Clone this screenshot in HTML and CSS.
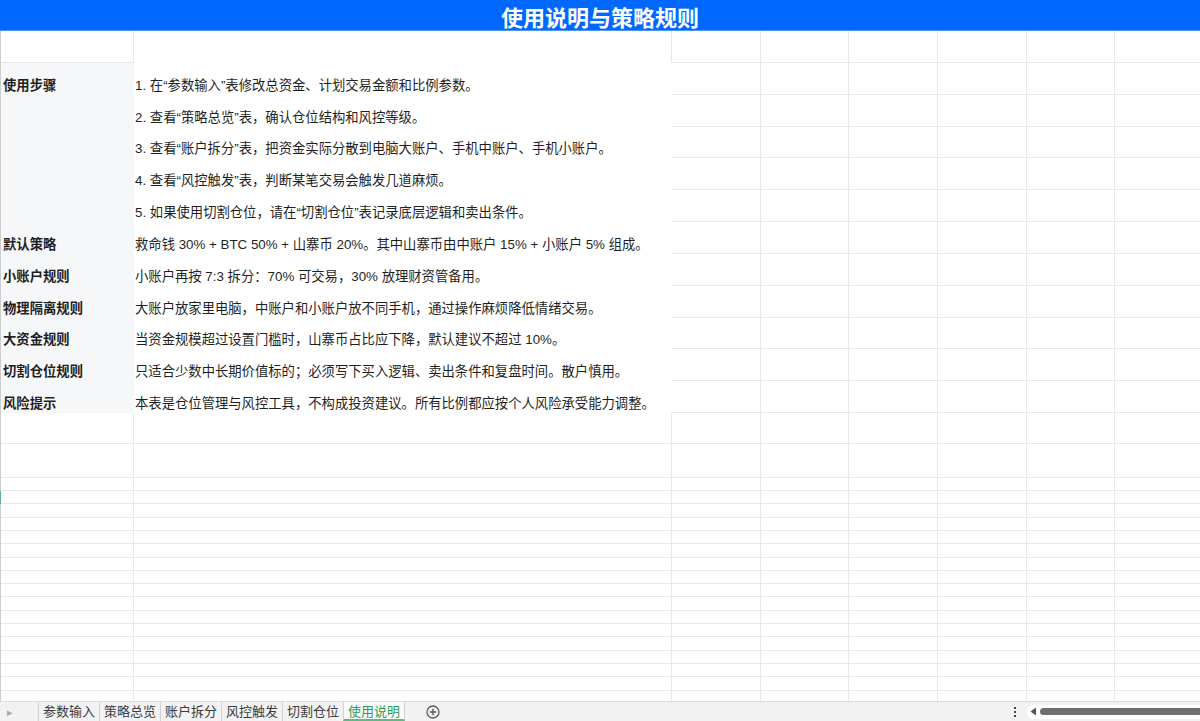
FILE: index.html
```html
<!DOCTYPE html>
<html lang="zh-CN">

<head>
    <meta charset="UTF-8">
    <meta name="viewport" content="width=device-width, initial-scale=1.0">
    <title>使用说明</title>

    <link rel="stylesheet" href="styles.css">
</head>

<body>

    <header class="title">使用说明与策略规则</header>

    <div class="sheet">
        <div class="row r-head">
            <div class="cell"></div>
            <div class="cell merged"></div>
            <div class="cell"></div><div class="cell"></div><div class="cell"></div><div class="cell"></div><div class="cell"></div><div class="cell"></div><div class="cell"></div>
        </div>

        <div class="row r-text">
            <div class="cell label">使用步骤</div>
            <div class="cell body">1. 在“参数输入”表修改总资金、计划交易金额和比例参数。</div>
            <div class="cell"></div><div class="cell"></div><div class="cell"></div><div class="cell"></div><div class="cell"></div><div class="cell"></div><div class="cell"></div>
        </div>
        <div class="row r-text">
            <div class="cell label"></div>
            <div class="cell body">2. 查看“策略总览”表，确认仓位结构和风控等级。</div>
            <div class="cell"></div><div class="cell"></div><div class="cell"></div><div class="cell"></div><div class="cell"></div><div class="cell"></div><div class="cell"></div>
        </div>
        <div class="row r-text">
            <div class="cell label"></div>
            <div class="cell body">3. 查看“账户拆分”表，把资金实际分散到电脑大账户、手机中账户、手机小账户。</div>
            <div class="cell"></div><div class="cell"></div><div class="cell"></div><div class="cell"></div><div class="cell"></div><div class="cell"></div><div class="cell"></div>
        </div>
        <div class="row r-text">
            <div class="cell label"></div>
            <div class="cell body">4. 查看“风控触发”表，判断某笔交易会触发几道麻烦。</div>
            <div class="cell"></div><div class="cell"></div><div class="cell"></div><div class="cell"></div><div class="cell"></div><div class="cell"></div><div class="cell"></div>
        </div>
        <div class="row r-text">
            <div class="cell label"></div>
            <div class="cell body">5. 如果使用切割仓位，请在“切割仓位”表记录底层逻辑和卖出条件。</div>
            <div class="cell"></div><div class="cell"></div><div class="cell"></div><div class="cell"></div><div class="cell"></div><div class="cell"></div><div class="cell"></div>
        </div>
        <div class="row r-text">
            <div class="cell label">默认策略</div>
            <div class="cell body">救命钱 30% + BTC 50% + 山寨币 20%。其中山寨币由中账户 15% + 小账户 5% 组成。</div>
            <div class="cell"></div><div class="cell"></div><div class="cell"></div><div class="cell"></div><div class="cell"></div><div class="cell"></div><div class="cell"></div>
        </div>
        <div class="row r-text">
            <div class="cell label">小账户规则</div>
            <div class="cell body">小账户再按 7:3 拆分：70% 可交易，30% 放理财资管备用。</div>
            <div class="cell"></div><div class="cell"></div><div class="cell"></div><div class="cell"></div><div class="cell"></div><div class="cell"></div><div class="cell"></div>
        </div>
        <div class="row r-text">
            <div class="cell label">物理隔离规则</div>
            <div class="cell body">大账户放家里电脑，中账户和小账户放不同手机，通过操作麻烦降低情绪交易。</div>
            <div class="cell"></div><div class="cell"></div><div class="cell"></div><div class="cell"></div><div class="cell"></div><div class="cell"></div><div class="cell"></div>
        </div>
        <div class="row r-text">
            <div class="cell label">大资金规则</div>
            <div class="cell body">当资金规模超过设置门槛时，山寨币占比应下降，默认建议不超过 10%。</div>
            <div class="cell"></div><div class="cell"></div><div class="cell"></div><div class="cell"></div><div class="cell"></div><div class="cell"></div><div class="cell"></div>
        </div>
        <div class="row r-text">
            <div class="cell label">切割仓位规则</div>
            <div class="cell body">只适合少数中长期价值标的；必须写下买入逻辑、卖出条件和复盘时间。散户慎用。</div>
            <div class="cell"></div><div class="cell"></div><div class="cell"></div><div class="cell"></div><div class="cell"></div><div class="cell"></div><div class="cell"></div>
        </div>
        <div class="row r-text">
            <div class="cell label">风险提示</div>
            <div class="cell body">本表是仓位管理与风控工具，不构成投资建议。所有比例都应按个人风险承受能力调整。</div>
            <div class="cell"></div><div class="cell"></div><div class="cell"></div><div class="cell"></div><div class="cell"></div><div class="cell"></div><div class="cell"></div>
        </div>

        <div class="row r-a"><div class="cell"></div><div class="cell"></div><div class="cell"></div><div class="cell"></div><div class="cell"></div><div class="cell"></div><div class="cell"></div><div class="cell"></div><div class="cell"></div></div>
        <div class="row r-b"><div class="cell"></div><div class="cell"></div><div class="cell"></div><div class="cell"></div><div class="cell"></div><div class="cell"></div><div class="cell"></div><div class="cell"></div><div class="cell"></div></div>
        <div id="small-rows"></div>
    </div>

    <footer class="tabs">
        <div class="tab-nav">&#9656;</div>
        <div class="tab">参数输入</div>
        <div class="tab">策略总览</div>
        <div class="tab">账户拆分</div>
        <div class="tab">风控触发</div>
        <div class="tab">切割仓位</div>
        <div class="tab active">使用说明</div>
        <div class="tab-add">
            <svg width="14" height="14" viewBox="0 0 14 14">
                <circle cx="7" cy="7" r="6" fill="none" stroke="#5a5a5a" stroke-width="1.3" />
                <path d="M7 3.8v6.4M3.8 7h6.4" stroke="#5a5a5a" stroke-width="1.4" />
            </svg>
        </div>
        <div class="tab-tools">
            <span class="dots"><i></i><i></i><i></i></span>
            <div class="scroll">
                <svg width="7" height="9" viewBox="0 0 7 9"><path d="M6 0.5v8L0.5 4.5z" fill="#555" /></svg>
                <div class="thumb"></div>
            </div>
        </div>
    </footer>

    <script type="text/javascript">
        // filler rows below the data, default height
        const holder = document.getElementById('small-rows');
        for (let i = 0; i < 20; i++) {
            const row = document.createElement('div');
            row.className = i === 1 ? 'row r-small sel' : 'row r-small';
            for (let c = 0; c < 9; c++) {
                const cell = document.createElement('div');
                cell.className = 'cell';
                row.appendChild(cell);
            }
            holder.appendChild(row);
        }
    </script>

</body>

</html>
```

FILE: styles.css
```css
* {
    box-sizing: border-box;
}

body {
    margin: 0;
    height: 100vh;
    display: flex;
    flex-direction: column;
    overflow: hidden;
    font-family: "Liberation Sans", "Noto Sans CJK SC", sans-serif;
    font-size: 13.33px;
    color: #1f1f1f;
    background: #fff;
}

.title {
    flex-shrink: 0;
    height: 31px;
    background-color: #0068ff;
    border-bottom: 1px solid #4f95ff;
    color: #fff;
    font-family: "Noto Sans CJK SC", sans-serif;
    font-weight: bold;
    font-size: 22px;
    display: flex;
    align-items: center;
    justify-content: center;
    padding-top: 1px;
}

.sheet {
    flex: 1;
    overflow: hidden;
}

.row {
    display: grid;
    grid-template-columns: 133px 538px 89px 88px 89px 89px 88px 89px 89px;
    border-left: 1px solid #cdcdcd;
}

.row.sel {
    border-left-color: #5fb683;
}

.cell {
    border-right: 1px solid #e8e8e8;
    border-bottom: 1px solid #e8e8e8;
    display: flex;
    align-items: flex-end;
    white-space: nowrap;
    line-height: 15px;
    padding: 0 1px 1px;
}

.r-head {
    height: 32px;
}

.r-head .merged {
    border-bottom-color: transparent;
}

.r-text {
    height: 31.82px;
}

.r-text .label,
.r-text .body {
    border-color: transparent;
}

.r-text .label {
    background-color: #f6f7f9;
    font-weight: bold;
    padding-left: 2px;
}

.r-a {
    height: 31px;
}

.r-b {
    height: 33.6px;
}

.r-small {
    height: 13.33px;
}

/* sheet tabs */
.tabs {
    flex-shrink: 0;
    height: 20px;
    background-color: #f2f2f2;
    border-top: 1px solid #dedede;
    display: flex;
    align-items: stretch;
    font-family: "Noto Sans CJK SC", sans-serif;
    font-size: 13px;
    color: #3c3c3c;
}

.tab-nav {
    width: 38px;
    padding-left: 7px;
    color: #a8a8a8;
    font-size: 11px;
    line-height: 19px;
}

.tab {
    border-left: 1px solid #d2d2d2;
    padding: 0 4px;
    line-height: 18px;
    white-space: nowrap;
}

.tab.active {
    background-color: #fafafa;
    color: #2e9c5b;
    border-bottom: 2px solid #5dba85;
    border-right: 1px solid #d2d2d2;
}

.tab-add {
    margin-left: 21px;
    display: flex;
    align-items: center;
}

.tab-tools {
    margin-left: auto;
    display: flex;
    align-items: center;
}

.dots {
    display: flex;
    flex-direction: column;
    gap: 2px;
    margin-right: 11px;
}

.dots i {
    display: block;
    width: 2px;
    height: 2px;
    background-color: #444;
}

.scroll {
    width: 173px;
    height: 14px;
    background-color: #fff;
    border-radius: 7px 0 0 7px;
    display: flex;
    align-items: center;
    padding-left: 3px;
}

.thumb {
    flex: 1;
    height: 7px;
    margin-left: 3px;
    background-color: #6e6e6e;
    border-radius: 4px 0 0 4px;
}
```
